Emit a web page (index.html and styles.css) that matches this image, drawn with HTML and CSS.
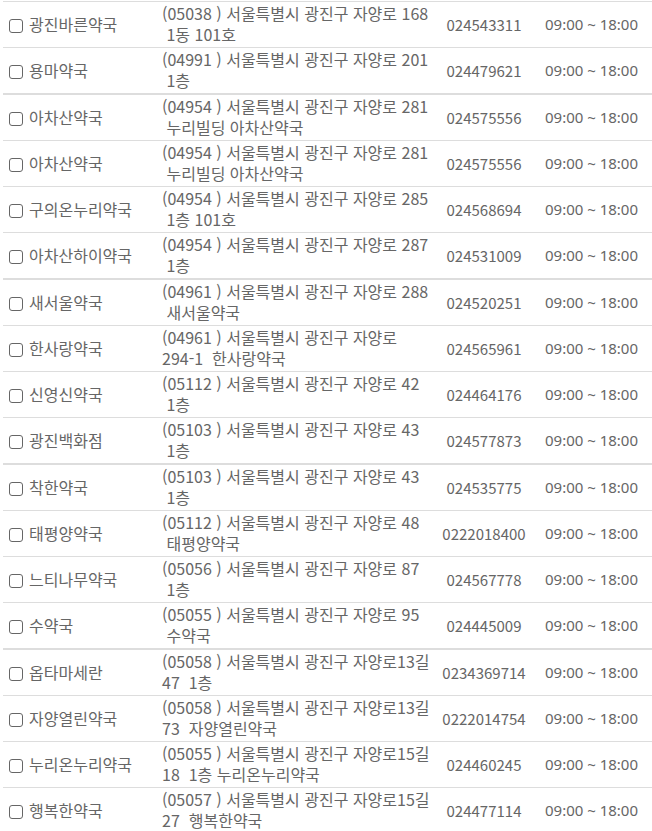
FILE: index.html
```html
<!DOCTYPE html>
<html lang="ko">
<head>
<meta charset="utf-8">
<title>약국 목록</title>
<link rel="stylesheet" href="styles.css">
</head>
<body>
<div class="wrap">
<table class="list">
<colgroup><col class="c-name"><col class="c-addr"><col class="c-tel"><col class="c-time"></colgroup>
<tbody>
<tr class="first"><td class="name"><span class="cb"></span>광진바른약국</td><td class="addr">(05038 ) 서울특별시 광진구 자양로 168<br>&nbsp;1동 101호</td><td class="tel">024543311</td><td class="time">09:00 ~ 18:00</td></tr>
<tr><td class="name"><span class="cb"></span>용마약국</td><td class="addr">(04991 ) 서울특별시 광진구 자양로 201<br>&nbsp;1층</td><td class="tel">024479621</td><td class="time">09:00 ~ 18:00</td></tr>
<tr class="group"><td class="name"><span class="cb"></span>아차산약국</td><td class="addr">(04954 ) 서울특별시 광진구 자양로 281<br>&nbsp;누리빌딩 아차산약국</td><td class="tel">024575556</td><td class="time">09:00 ~ 18:00</td></tr>
<tr><td class="name"><span class="cb"></span>아차산약국</td><td class="addr">(04954 ) 서울특별시 광진구 자양로 281<br>&nbsp;누리빌딩 아차산약국</td><td class="tel">024575556</td><td class="time">09:00 ~ 18:00</td></tr>
<tr><td class="name"><span class="cb"></span>구의온누리약국</td><td class="addr">(04954 ) 서울특별시 광진구 자양로 285<br>&nbsp;1층 101호</td><td class="tel">024568694</td><td class="time">09:00 ~ 18:00</td></tr>
<tr><td class="name"><span class="cb"></span>아차산하이약국</td><td class="addr">(04954 ) 서울특별시 광진구 자양로 287<br>&nbsp;1층</td><td class="tel">024531009</td><td class="time">09:00 ~ 18:00</td></tr>
<tr class="group"><td class="name"><span class="cb"></span>새서울약국</td><td class="addr">(04961 ) 서울특별시 광진구 자양로 288<br>&nbsp;새서울약국</td><td class="tel">024520251</td><td class="time">09:00 ~ 18:00</td></tr>
<tr><td class="name"><span class="cb"></span>한사랑약국</td><td class="addr">(04961 ) 서울특별시 광진구 자양로<br>294-1 &nbsp;한사랑약국</td><td class="tel">024565961</td><td class="time">09:00 ~ 18:00</td></tr>
<tr><td class="name"><span class="cb"></span>신영신약국</td><td class="addr">(05112 ) 서울특별시 광진구 자양로 42<br>&nbsp;1층</td><td class="tel">024464176</td><td class="time">09:00 ~ 18:00</td></tr>
<tr><td class="name"><span class="cb"></span>광진백화점</td><td class="addr">(05103 ) 서울특별시 광진구 자양로 43<br>&nbsp;1층</td><td class="tel">024577873</td><td class="time">09:00 ~ 18:00</td></tr>
<tr class="group"><td class="name"><span class="cb"></span>착한약국</td><td class="addr">(05103 ) 서울특별시 광진구 자양로 43<br>&nbsp;1층</td><td class="tel">024535775</td><td class="time">09:00 ~ 18:00</td></tr>
<tr><td class="name"><span class="cb"></span>태평양약국</td><td class="addr">(05112 ) 서울특별시 광진구 자양로 48<br>&nbsp;태평양약국</td><td class="tel">0222018400</td><td class="time">09:00 ~ 18:00</td></tr>
<tr><td class="name"><span class="cb"></span>느티나무약국</td><td class="addr">(05056 ) 서울특별시 광진구 자양로 87<br>&nbsp;1층</td><td class="tel">024567778</td><td class="time">09:00 ~ 18:00</td></tr>
<tr><td class="name"><span class="cb"></span>수약국</td><td class="addr">(05055 ) 서울특별시 광진구 자양로 95<br>&nbsp;수약국</td><td class="tel">024445009</td><td class="time">09:00 ~ 18:00</td></tr>
<tr class="group"><td class="name"><span class="cb"></span>옵타마세란</td><td class="addr">(05058 ) 서울특별시 광진구 자양로13길<br>47 &nbsp;1층</td><td class="tel">0234369714</td><td class="time">09:00 ~ 18:00</td></tr>
<tr><td class="name"><span class="cb"></span>자양열린약국</td><td class="addr">(05058 ) 서울특별시 광진구 자양로13길<br>73 &nbsp;자양열린약국</td><td class="tel">0222014754</td><td class="time">09:00 ~ 18:00</td></tr>
<tr><td class="name"><span class="cb"></span>누리온누리약국</td><td class="addr">(05055 ) 서울특별시 광진구 자양로15길<br>18 &nbsp;1층 누리온누리약국</td><td class="tel">024460245</td><td class="time">09:00 ~ 18:00</td></tr>
<tr><td class="name"><span class="cb"></span>행복한약국</td><td class="addr">(05057 ) 서울특별시 광진구 자양로15길<br>27 &nbsp;행복한약국</td><td class="tel">024477114</td><td class="time">09:00 ~ 18:00</td></tr>
</tbody>
</table>
</div>
</body>
</html>
```

FILE: styles.css
```css
html, body {
  margin: 0;
  padding: 0;
  background: #fff;
}
body {
  font-family: "Noto Sans CJK KR", "Noto Sans", sans-serif;
  font-size: 16px;
  color: #666;
}
.wrap {
  padding: 1px 0 0 3px;
}
.list {
  width: 649px;
  table-layout: fixed;
  border-collapse: collapse;
}
.c-name { width: 154px; }
.c-addr { width: 280px; }
.c-tel { width: 94px; }
.c-time { width: 121px; }
.list td {
  border-top: 1px solid #ddd;
  height: 45px;
  box-sizing: border-box;
  padding: 1px 0 2px;
  line-height: 21px;
  vertical-align: middle;
  white-space: nowrap;
  overflow: hidden;
}
.list tr.group td {
  border-top: 2px solid #ddd;
}
.list .name {
  padding-left: 6px;
}
.list .addr {
  padding-left: 5px;
}
.list .tel,
.list .time {
  text-align: center;
  font-size: 15px;
}
.list .time {
  font-family: "Noto Sans", "Noto Sans CJK KR", sans-serif;
}
.cb {
  display: inline-block;
  width: 14px;
  height: 14px;
  box-sizing: border-box;
  border: 1.5px solid #666;
  border-radius: 3px;
  vertical-align: -2px;
  margin-right: 6px;
}
```
